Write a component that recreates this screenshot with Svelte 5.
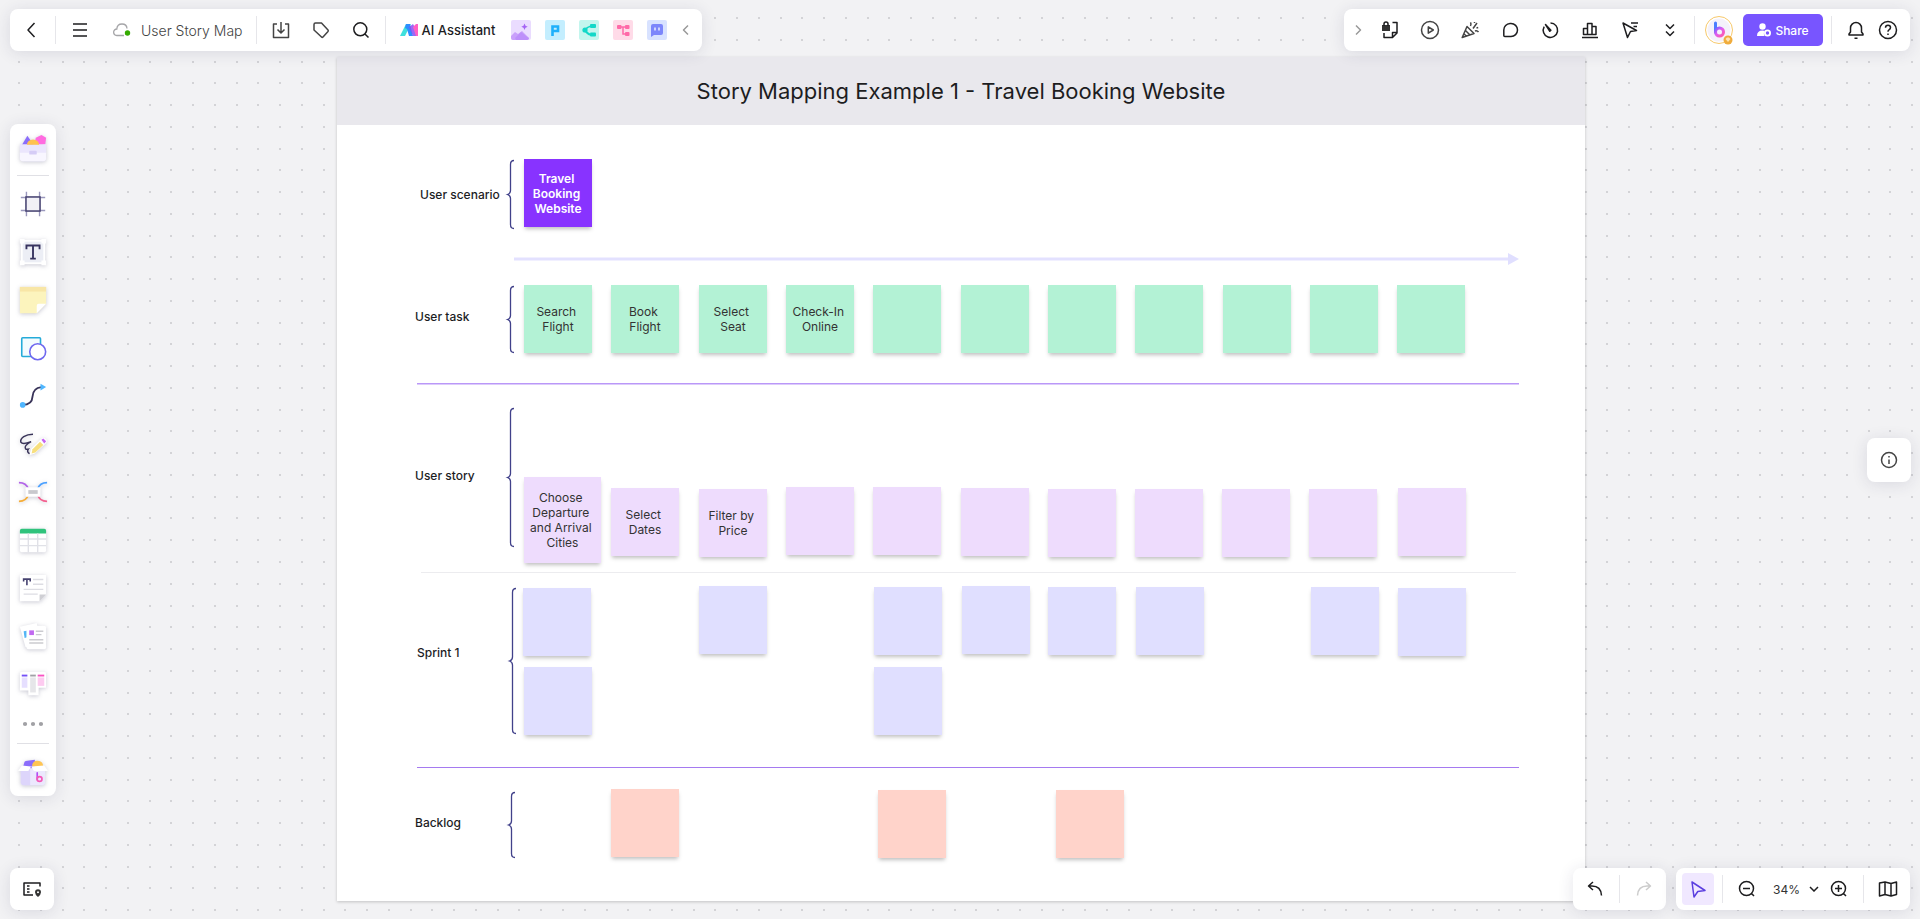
<script lang="ts">
	type Note = { x: number; y: number; text?: string; kind: string };

	// Canvas zoom; the dot grid is 64 units wide at 100%
	const zoom = 0.34;
	const gridStep = 64 * zoom;

	let innerHeight = $state(900);
	let gridRows = $derived(Array.from({ length: Math.ceil(innerHeight / gridStep) }, (_, i) => Math.round(18 + i * gridStep)));

	const taskTexts = ['Search \nFlight', 'Book \nFlight', 'Select \nSeat', 'Check-In \nOnline'];
	const taskX = [187, 274, 362, 449, 536, 624, 711, 798, 886, 973, 1060];

	const notes: Note[] = [
		{ x: 187, y: 102, kind: 'scenario', text: 'Travel \nBooking \nWebsite' },
		...taskX.map((x, i) => ({ x, y: 228, kind: 'task', text: taskTexts[i] })),

		{ x: 187, y: 420, kind: 'story large', text: 'Choose \nDeparture \nand Arrival \nCities' },
		{ x: 274, y: 431, kind: 'story', text: 'Select \nDates' },
		{ x: 362, y: 432, kind: 'story', text: 'Filter by \nPrice' },
		{ x: 449, y: 430, kind: 'story' },
		{ x: 536, y: 430, kind: 'story' },
		{ x: 624, y: 431, kind: 'story' },
		{ x: 711, y: 432, kind: 'story' },
		{ x: 798, y: 432, kind: 'story' },
		{ x: 885, y: 432, kind: 'story' },
		{ x: 972, y: 432, kind: 'story' },
		{ x: 1061, y: 431, kind: 'story' },

		{ x: 186, y: 531, kind: 'sprint' },
		{ x: 362, y: 529, kind: 'sprint' },
		{ x: 537, y: 530, kind: 'sprint' },
		{ x: 625, y: 529, kind: 'sprint' },
		{ x: 711, y: 530, kind: 'sprint' },
		{ x: 799, y: 530, kind: 'sprint' },
		{ x: 974, y: 530, kind: 'sprint' },
		{ x: 1061, y: 531, kind: 'sprint' },
		{ x: 187, y: 610, kind: 'sprint' },
		{ x: 537, y: 610, kind: 'sprint' },

		{ x: 274, y: 732, kind: 'backlog' },
		{ x: 541, y: 733, kind: 'backlog' },
		{ x: 719, y: 733, kind: 'backlog' }
	];

	const labels = [
		{ x: 83, y: 130, text: 'User scenario' },
		{ x: 78, y: 252, text: 'User task' },
		{ x: 78, y: 411, text: 'User story' },
		{ x: 80, y: 588, text: 'Sprint 1' },
		{ x: 78, y: 758, text: 'Backlog' }
	];

	const braces = [
		{ x: 170, y: 103, h: 69 },
		{ x: 170, y: 229, h: 67 },
		{ x: 170, y: 351, h: 139 },
		{ x: 172, y: 531, h: 146 },
		{ x: 171, y: 735, h: 66 }
	];

	function bracePath({ x, y, h }: { x: number; y: number; h: number }) {
		const m = h / 2;
		return `M${x + 7} ${y + 0.5}q-3.5 0-3.5 4V${y + m - 4}q0 3-3 4q3 1 3 4V${y + h - 4.5}q0 4 3.5 4`;
	}

	// Plain outline icons, 24 x 24
	const icons: Record<string, string> = {
		back: 'M15.500 5L9 12l6.500 7',
		menu: 'M5 6h14M5 12h14M5 18h14',
		download: 'M8 6H4.500v13.500h15V6H16M12 4v11M8.500 11.500L12 15l3.500-3.500',
		tag: 'M5 6.500q0-1.500 1.500-1.500H12.500L19 12q.6.800 0 1.500l-5 5.500q-.8.700-1.500 0L5 12z',
		search: 'M11.300 4.800a6.500 6.500 0 1 0 0 13 6.500 6.500 0 1 0 0-13M16.200 16.200L19.500 19.500',
		prev: 'M14 7.500L9.500 12l4.500 4.500',
		next: 'M10 7.500l4.500 4.500-4.500 4.500',
		play: 'M12 3.500a8.500 8.500 0 1 0 0 17 8.500 8.500 0 1 0 0-17M10.300 8.800v6.400l5-3.200z',
		celebrate:
			'M9 8.500l7 7L4.200 19.500zM7.500 12.500l4.500 4.500M6.200 16l2 2M12.500 8q1-2 0-3.700M15 10.500l4-5.500M17 13q2-1 3.500 1M16.500 4v1M20.200 9.500l-1.700.5',
		comment: 'M12 5.500h1a6.500 6.500 0 0 1 0 13H6.800q-1 0-1-1V12A6.500 6.500 0 0 1 12 5.500z',
		timer: 'M12.500 5a7.200 7.200 0 1 1-6.300 3.600M12.900 12.300L7.500 6.500l4.300 6.800z',
		chart: 'M4 19.500h16M5.500 16.500v-6h4v6zM9.500 16.500V5.500h4.500v11zM14 16.500V8.500h4v8zM5.500 16.500H18',
		pointer: 'M5 5l4.500 14.500 3-6 6-1zM13 5h7M15.500 8.500h3.500',
		more: 'M8 6.500l4 4 4-4M8 13.500l4 4 4-4',
		bell: 'M5 17V16l1.500-2V10a5.500 5.500 0 0 1 11 0v4l1.500 2v1zM10.500 20.300h3',
		help: 'M12 3.500a8.500 8.500 0 1 0 0 17 8.500 8.500 0 1 0 0-17M9.500 9.800q0-2.500 2.500-2.500t2.500 2.300q0 1.400-1.500 2.200-1 .6-1 2M12 15.500v1.500',
		info: 'M12 4.500a7.500 7.500 0 1 0 0 15 7.500 7.500 0 1 0 0-15M12 11.500v4.500M12 8v1.500',
		undo: 'M10 5L5.500 9l4.500 4M5.500 9H9q9 0 9.500 9.500',
		redo: 'M14 5l4.500 4-4.500 4M18.500 9H15Q6 9 5.500 18.500',
		cursor: 'M6 5l2 15 3.800-5.500L19 13.500z',
		zoomOut: 'M11.500 4.500a7 7 0 1 0 0 14 7 7 0 1 0 0-14M16.500 16.500L19 19M8 11.500h7',
		zoomIn: 'M11.500 4.500a7 7 0 1 0 0 14 7 7 0 1 0 0-14M16.500 16.500L19 19M8 11.500h7M11.500 8v7',
		map: 'M3.500 6v13l5.500-1.500 6 1.500 5.500-1.500V5L15 6.500 9 5zM9 5v12.500M15 6.500V19'
	};

	const rightTools = ['play', 'celebrate', 'comment', 'timer', 'chart', 'pointer', 'more'];
</script>

<svelte:window bind:innerHeight />

{#snippet icon(name: string)}
	<svg class="icon" viewBox="0 0 24 24" aria-hidden="true"><path d={icons[name]} /></svg>
{/snippet}

<div class="app">
	<svg class="grid" aria-hidden="true">
		{#each gridRows as y}
			<line x1="18" x2="100%" y1={y} y2={y} stroke-dasharray="2 {gridStep - 2}" />
		{/each}
	</svg>

	<main class="frame">
		<h1>Story Mapping Example 1 - Travel Booking Website</h1>

		<svg class="lines" viewBox="0 0 1248 844" aria-hidden="true">
			<path d="M177 202H1172" stroke="#e3e1ff" stroke-width="3" />
			<path d="M1171 196l11 6-11 6z" fill="#e0dfff" />
			<path d="M80 326.800H1182" stroke="#ba97f8" stroke-width="1.500" />
			<path d="M84 515.500H1179" stroke="#ececef" />
			<path d="M80 710.500H1182" stroke="#a57af0" />
			{#each braces as b}
				<path d={bracePath(b)} fill="none" stroke="#41418a" stroke-width="1.300" />
			{/each}
		</svg>

		{#each labels as l}
			<span class="label" style:left="{l.x}px" style:top="{l.y}px">{l.text}</span>
		{/each}

		{#each notes as n}
			<div class="note {n.kind}" style:left="{n.x}px" style:top="{n.y}px">{n.text ?? ''}</div>
		{/each}
	</main>

	<header class="panel bar top-left">
		<button aria-label="Back">{@render icon('back')}</button>
		<i class="sep"></i>
		<button aria-label="Menu">{@render icon('menu')}</button>
		<button class="doc-title">
			<svg width="18" height="14" viewBox="0 0 18 14" aria-hidden="true">
				<path d="M11 12.500H4A3.200 3.200 0 0 1 3.800 6C4 3 6.200 1 9 1s4.800 1.800 5 4.500" fill="none" stroke="#a5a5a8" stroke-width="1.300" />
				<circle cx="14.500" cy="10" r="2.700" fill="#35ab00" />
			</svg>
			User Story Map
		</button>
		<i class="sep"></i>
		<button class="soft" aria-label="Export">{@render icon('download')}</button>
		<button class="soft" aria-label="Tag">{@render icon('tag')}</button>
		<button aria-label="Search">{@render icon('search')}</button>
		<i class="sep"></i>
		<button class="assistant">
			<svg width="18" height="14" viewBox="0 0 18 14" aria-hidden="true">
				<path d="M6 1h5L5 13H0z" fill="#3fe0dc" />
				<path d="M6 1h4l3 12H9L7 6 5 5z" fill="#2f8dff" />
				<path d="M9 4l4 9h4V8l-4-7z" fill="#8a4df5" opacity=".85" />
				<path d="M13 4l3-3h2v12h-2z" fill="#ff5fc4" />
			</svg>
			AI Assistant
		</button>
		<div class="ai-tools">
			<button aria-label="AI image">
				<svg viewBox="0 0 20 20">
					<rect width="20" height="20" rx="2" fill="#eadcff" />
					<path d="M0 16l4-4 3 2 4-3 7 7q0 2-2 2H2q-2 0-2-2z" fill="#c9a0fb" />
					<path d="M4 18l6-6 5 4 3 2q0 2-3 2H5z" fill="#b583fa" opacity=".6" />
					<path d="M13.500 3.500l1 2.200 2.200 1-2.200 1-1 2.200-1-2.200-2.200-1 2.200-1z" fill="#a564f5" />
				</svg>
			</button>
			<button aria-label="AI presentation">
				<svg viewBox="0 0 20 20">
					<rect width="20" height="20" rx="2" fill="#c4eefe" />
					<path d="M7.500 16V6.500H13V11H8" fill="none" stroke="#1fb0fb" stroke-width="2.600" />
				</svg>
			</button>
			<button aria-label="AI mind map">
				<svg viewBox="0 0 20 20">
					<rect width="20" height="20" rx="2" fill="#c3f6ee" />
					<path d="M15 6h-3q-4 1-6 4 2 4 6 5h3" fill="none" stroke="#12d8c8" stroke-width="1.800" />
					<rect x="11" y="4" width="6" height="4" rx="1" fill="#12d8c8" />
					<rect x="11" y="12.500" width="6" height="4" rx="1" fill="#12d8c8" />
					<circle cx="6" cy="10" r="2.600" fill="#12d8c8" />
				</svg>
			</button>
			<button aria-label="AI diagram">
				<svg viewBox="0 0 20 20">
					<rect width="20" height="20" rx="2" fill="#ffdbe8" />
					<path d="M6 7h8M10 7v7h4" fill="none" stroke="#ff6aa8" stroke-width="1.500" />
					<rect x="4" y="5" width="4.500" height="4" rx="1" fill="#ff6aa8" />
					<rect x="12" y="5" width="4.500" height="4" rx="1" fill="#ff6aa8" />
					<rect x="12" y="12" width="4.500" height="4" rx="1" fill="#ff6aa8" />
				</svg>
			</button>
			<button aria-label="AI chat">
				<svg viewBox="0 0 20 20">
					<rect width="20" height="20" rx="2" fill="#d8e2ff" />
					<path d="M6 4h8q2 0 2 2v7q0 2-2 2H7l-3 2V6q0-2 2-2z" fill="#7c86fb" />
					<path d="M8 7.500v3M12 7.500v3" stroke="#e4e7ff" stroke-width="1.600" />
				</svg>
			</button>
		</div>
		<button class="collapse faint" aria-label="Collapse">{@render icon('prev')}</button>
	</header>

	<nav class="panel bar top-right">
		<button class="narrow faint" aria-label="Expand">{@render icon('next')}</button>
		<button aria-label="Lock">
			<svg class="icon" viewBox="0 0 24 24">
				<path d="M14.500 4.500H19V15l-4.500 4.500H6V15M19 14.500h-4.500v5" />
				<rect x="4" y="7" width="8" height="6" fill="#333" stroke="none" />
				<path d="M6 8V6q0-2 2-2t2 2v2" />
			</svg>
		</button>
		{#each rightTools as name}
			<button class:soft={name === 'play' || name === 'celebrate'} aria-label={name}>{@render icon(name)}</button>
		{/each}
		<i class="sep"></i>
		<button class="avatar" aria-label="Account">
			<svg width="32" height="32" viewBox="0 0 32 32">
				<defs>
					<linearGradient id="brand" x1="0" y1="0" x2="1" y2="1">
						<stop offset="0" stop-color="#7a62ff" />
						<stop offset=".45" stop-color="#e05cf0" />
						<stop offset="1" stop-color="#ff5ba8" />
					</linearGradient>
				</defs>
				<circle cx="16" cy="16" r="13.500" fill="#fff" stroke="#f7c96b" />
				<circle cx="16" cy="16" r="11.500" fill="#f4f1fb" />
				<path d="M12.500 9v9" fill="none" stroke="#4b7dff" stroke-width="3" stroke-linecap="round" />
				<circle cx="16.500" cy="18" r="4" fill="none" stroke="url(#brand)" stroke-width="3" />
				<circle cx="25" cy="26" r="4.500" fill="#f0ac3c" />
				<path d="M22.500 25l1.500-1.500h2l1.500 1.500-2.500 3z" fill="#ffe6b0" />
			</svg>
		</button>
		<button class="share">
			<svg width="14" height="14" viewBox="0 0 14 14" aria-hidden="true">
				<circle cx="5.500" cy="3.500" r="3.200" fill="#fff" />
				<path d="M0 13q0-5.500 5.500-5.500 1.500 0 2.500.5-2 2-.5 5z" fill="#fff" />
				<circle cx="10.500" cy="10" r="2.600" fill="none" stroke="#fff" stroke-width="1.800" />
			</svg>
			Share
		</button>
		<i class="sep"></i>
		<div class="pair">
			<button aria-label="Notifications">{@render icon('bell')}</button>
			<button aria-label="Help">{@render icon('help')}</button>
		</div>
	</nav>

	<aside class="panel tools">
		<button aria-label="Templates">
			<svg class="lift" viewBox="0 0 32 32">
				<path d="M4 13L10 3l7 10z" fill="#8b6dfb" />
				<path d="M19 5l6-3 5 3-1 7-7 1-4-3z" fill="#ff6be0" />
				<path d="M2 12h28v15q0 3-3 3H5q-3 0-3-3z" fill="#ebe6fd" />
				<path d="M2 21h28v6q0 3-3 3H5q-3 0-3-3z" fill="#f8f6ff" />
				<path d="M9.500 12.500a6.500 5.500 0 0 1 13 0z" fill="#ffc24f" />
				<rect x="12" y="19" width="8" height="4" rx="1" fill="#d5ccf6" />
			</svg>
		</button>
		<i class="rule"></i>
		<button aria-label="Frame">
			<svg viewBox="0 0 32 32">
				<path d="M9 3v26M23 3v26M3 9h26M3 23h26" stroke="#9a98bd" stroke-width="1.500" />
				<rect x="8.500" y="8.500" width="15" height="15" fill="#f1f0f6" stroke="#45416f" stroke-width="1.600" />
			</svg>
		</button>
		<button aria-label="Text">
			<svg class="lift" viewBox="0 0 32 32">
				<rect x="4" y="4" width="24" height="24" fill="#eceef5" stroke="#fff" stroke-width="2" />
				<path d="M2 2h5v5H2zM25 2h5v5h-5zM2 25h5v5H2zM25 25h5v5h-5z" fill="#fff" />
				<path d="M9 13V9h14v4M16 9v14M13 23h6" fill="none" stroke="#37335f" stroke-width="2" />
			</svg>
		</button>
		<button aria-label="Sticky note">
			<svg class="lift" viewBox="0 0 32 32">
				<path d="M2 2h28v18l-10 10H2z" fill="#fcf4bd" />
				<path d="M2 2h28v5H2z" fill="#f8e6a6" />
				<path d="M20 30v-8q0-2 2-2h8z" fill="#fff" />
			</svg>
		</button>
		<button aria-label="Shapes">
			<svg viewBox="0 0 32 32">
				<rect x="4" y="5" width="20" height="20" rx="1" fill="#f3fbfe" stroke="#25abd9" stroke-width="1.700" />
				<circle cx="21" cy="20" r="8.500" fill="#fff" stroke="#6f68ef" stroke-width="1.700" />
			</svg>
		</button>
		<button aria-label="Connector">
			<svg viewBox="0 0 32 32">
				<path d="M5 25.500q10 0 10.500-9T25 6.500" fill="none" stroke="#393459" stroke-width="2" />
				<circle cx="5" cy="25.500" r="3" fill="#4fb6ff" />
				<path d="M24 3l6 3.500-6 3.500z" fill="#4fb6ff" />
			</svg>
		</button>
		<button aria-label="Pen">
			<svg class="lift" viewBox="0 0 32 32">
				<path d="M16 5.500C8 5.500 2 9.500 3 14q2 3 11-.500C9 16 6.500 19 8 21q1 1 3 .5-2 3 1.500 5" fill="none" stroke="#393459" stroke-width="1.600" />
				<path d="M12 28l2-7L25 10q3-2 5 1t-1 5L18 26z" fill="#fff" />
				<path d="M14.500 26l1-4.500 8-8 3.500 3.500-8.500 8z" fill="#f7df7e" />
				<path d="M25 11.500l2-1.500 3 3-2 2.500z" fill="#c564f3" />
			</svg>
		</button>
		<button aria-label="Mind map">
			<svg class="lift" viewBox="0 0 32 32">
				<g fill="none" stroke-width="1.800">
					<path d="M1 6q8 0 10 7" stroke="#b263e8" />
					<path d="M31 6q-8 0-10 7" stroke="#4aa0ff" />
					<path d="M1 26q8 0 10-7" stroke="#f6ad37" />
					<path d="M31 26q-8 0-10-7" stroke="#f3608f" />
				</g>
				<rect x="8" y="11" width="16" height="10" rx="1" fill="#fff" />
				<rect x="11" y="14" width="10" height="4" fill="#c9c9cd" />
			</svg>
		</button>
		<button aria-label="Table">
			<svg class="lift" viewBox="0 0 32 32">
				<rect x="2" y="4" width="28" height="25" rx="2" fill="#fff" />
				<path d="M2 9V6q0-2 2-2h24q2 0 2 2v3z" fill="#30c37c" />
				<path d="M2 15h28M2 22h28M11 9v20M21 9v20" stroke="#e0e1e7" stroke-width="1.500" />
			</svg>
		</button>
		<button aria-label="Document">
			<svg class="lift" viewBox="0 0 32 32">
				<path d="M2 2h28v21l-7 7H2z" fill="#fff" />
				<path d="M6 9V6.500h7V9M9.500 6.500V13" fill="none" stroke="#45416f" stroke-width="1.700" />
				<path d="M16 7h11M16 12h11M6 17.500h21M6 22.500h15" stroke="#dddde3" stroke-width="1.500" />
				<path d="M23 30v-7h7z" fill="#cfcfd4" />
			</svg>
		</button>
		<button aria-label="Cards">
			<svg class="lift" viewBox="0 0 32 32">
				<path d="M2 6l18-4 4 22-16 4z" fill="#fff" />
				<path d="M6 11l5-1v7l-4 1z" fill="#53b5f5" />
				<rect x="9" y="5" width="21" height="25" rx="2" fill="#fff" />
				<rect x="12" y="10" width="5" height="5" fill="#c16af0" />
				<path d="M19 11h8M19 14.500h6M12 20h15M12 23.500h15" stroke="#cbcbd0" stroke-width="1.500" />
			</svg>
		</button>
		<button aria-label="Kanban">
			<svg class="lift" viewBox="0 0 32 32">
				<path d="M4 3h24q2 0 2 2v15h-8v8H11v-5H2V5q0-2 2-2z" fill="#fff" />
				<path d="M4 7h6" stroke="#7450f7" stroke-width="2" />
				<path d="M13 7h6" stroke="#a1a1a6" stroke-width="2" />
				<path d="M21 7h7" stroke="#f951c3" stroke-width="2" />
				<path d="M4 9h6v11H4z" fill="#e6dfff" />
				<path d="M13 9h6v16h-6z" fill="#e6e6e9" />
				<path d="M21 9h7v9h-7z" fill="#fdcbf0" />
			</svg>
		</button>
		<button class="dots" aria-label="More tools">
			<svg viewBox="0 0 32 32"><path d="M7.500 16h.01M16 16h.01M24.500 16h.01" stroke="#a1a1a5" stroke-width="4.500" stroke-linecap="round" /></svg>
		</button>
		<i class="rule"></i>
		<button aria-label="Resources">
			<svg class="lift" viewBox="0 0 32 32">
				<path d="M5 12l2-7q1-1 3-1l8-1v9z" fill="#8b6dfb" />
				<path d="M15 10q0-6 6-6t6 7z" fill="#ffc553" />
				<path d="M3 12h26v15q0 3-3 3H6q-3 0-3-3z" fill="#ece8fd" />
				<path d="M3 12h10v18H6q-3 0-3-3z" fill="#ddd5fb" />
				<path d="M4 9l10 1-3 5H0zM28 9l-14 1 3 5h15z" fill="#fff" />
				<path d="M20.500 17v7" stroke="#b44df4" stroke-width="1.800" stroke-linecap="round" />
				<circle cx="23" cy="23.500" r="2.600" fill="none" stroke="#f459b9" stroke-width="1.800" />
			</svg>
		</button>
	</aside>

	<button class="panel square layers" aria-label="Layers">
		<svg class="icon" viewBox="0 0 24 24">
			<path d="M13 18H4V6h16v3.500M7 9h2.500M7 12h2.500M7 15h2.500" />
			<path d="M18 20q-3-2.500-3-4.800a3 3 0 0 1 6 0Q21 17.500 18 20zm0-5.800a1 1 0 1 0 0 2 1 1 0 1 0 0-2" fill="#333" fill-rule="evenodd" stroke="none" />
		</svg>
	</button>

	<button class="panel square soft info" aria-label="Info">{@render icon('info')}</button>

	<footer class="bottom-right">
		<div class="panel bar">
			<button aria-label="Undo">{@render icon('undo')}</button>
			<i class="sep"></i>
			<button class="disabled" aria-label="Redo" disabled>{@render icon('redo')}</button>
		</div>
		<div class="panel bar">
			<button class="active" aria-label="Select">{@render icon('cursor')}</button>
			<i class="sep"></i>
			<button aria-label="Zoom out">{@render icon('zoomOut')}</button>
			<div class="zoom">
				<select aria-label="Zoom level">
					<option>34%</option>
				</select>
				<svg width="10" height="6" viewBox="0 0 10 6" aria-hidden="true"><path d="M1 1l4 4 4-4" /></svg>
			</div>
			<button aria-label="Zoom in">{@render icon('zoomIn')}</button>
			<i class="sep"></i>
			<button aria-label="Map">{@render icon('map')}</button>
		</div>
	</footer>
</div>

<style>
	:global(body) {
		overflow: hidden;
	}

	.app {
		position: relative;
		height: 100vh;
		overflow: hidden;
		background: #f2f2f4;
		color: #1d1d1f;
		font-family: Inter, 'Liberation Sans', sans-serif;
	}

	.grid {
		position: absolute;
		width: 100%;
		height: 100%;
	}

	.grid line {
		stroke: #d3d3d6;
		stroke-width: 2;
		shape-rendering: crispEdges;
	}

	/* story map */
	.frame {
		position: absolute;
		left: calc(50% - 623px);
		top: 57px;
		width: 1248px;
		height: 844px;
		background: #fff;
		box-shadow: 0 1px 3px rgba(0, 0, 0, 0.2);
	}

	h1 {
		margin: 0;
		background: #e9e8ed;
		font-size: 22px;
		font-weight: 400;
		line-height: 68px;
		text-align: center;
	}

	.lines {
		position: absolute;
		inset: 0;
	}

	.label {
		position: absolute;
		font-size: 12px;
		font-weight: 500;
		line-height: 16px;
		white-space: nowrap;
	}

	.note {
		position: absolute;
		display: flex;
		align-items: center;
		justify-content: center;
		width: 68px;
		height: 68px;
		box-shadow: 0 3px 4px -1px rgba(0, 0, 0, 0.25);
		color: #333;
		font-size: 12px;
		line-height: 15px;
		text-align: center;
		white-space: pre;
	}

	.note.large {
		width: 77px;
		height: 86px;
	}

	.scenario {
		background: #8833ff;
		color: #fff;
		font-weight: 600;
	}

	.task {
		background: #b3f2d5;
	}

	.story {
		background: #eedcfd;
	}

	.sprint {
		background: #e0dfff;
	}

	.backlog {
		background: #ffd3ca;
	}

	/* floating panels */
	.panel {
		border-radius: 8px;
		background: #fff;
		box-shadow: 0 2px 16px rgba(40, 40, 80, 0.12);
	}

	.bar {
		display: flex;
		align-items: center;
		gap: 8px;
		height: 42px;
		padding: 0 6px;
	}

	.top-left {
		position: absolute;
		left: 10px;
		top: 9px;
		padding: 0 5px;
	}

	.top-right {
		position: absolute;
		right: 10px;
		top: 9px;
	}

	button {
		display: flex;
		flex: none;
		align-items: center;
		justify-content: center;
		width: 32px;
		height: 32px;
		padding: 0;
		border: 0;
		border-radius: 4px;
		background: none;
		color: #1d1d1f;
		font: inherit;
		cursor: pointer;
	}

	.icon {
		flex: none;
		width: 24px;
		height: 24px;
		fill: none;
		stroke: currentColor;
		stroke-width: 1.5;
		stroke-linejoin: round;
	}

	.soft {
		color: #444;
	}

	.faint {
		color: #999;
	}

	.narrow {
		width: 16px;
	}

	.collapse {
		width: 22px;
	}

	.sep {
		width: 1px;
		height: 28px;
		background: #e6e6ea;
	}

	.doc-title {
		gap: 10px;
		width: auto;
		padding: 0 5px 0 9px;
		color: #444;
		font-size: 14px;
		font-weight: 300;
	}

	.assistant {
		gap: 4px;
		width: auto;
		padding: 0 8px 0 6px;
		font-size: 13px;
		font-weight: 500;
	}

	.ai-tools {
		display: flex;
		gap: 14px;
	}

	.ai-tools button,
	.ai-tools svg {
		width: 20px;
		height: 20px;
	}

	.share {
		gap: 4px;
		width: 80px;
		border-radius: 5px;
		background: #7855ff;
		color: #fff;
		font-size: 12px;
		font-weight: 500;
	}

	.pair {
		display: flex;
	}

	.tools {
		position: absolute;
		left: 10px;
		top: 124px;
		width: 46px;
	}

	.tools button {
		width: 46px;
		height: 48px;
	}

	.tools .dots {
		height: 32px;
	}

	.tools svg {
		width: 30px;
		height: 30px;
		overflow: visible;
		fill: none;
	}

	.lift {
		filter: drop-shadow(0 1px 2px rgba(40, 40, 80, 0.25));
	}

	.rule {
		display: block;
		height: 1px;
		margin: 3px 7px 4px;
		background: #e0e0e5;
	}

	.square {
		position: absolute;
		width: 44px;
		height: 44px;
		border-radius: 8px;
		background: #fff;
	}

	.layers {
		left: 10px;
		bottom: 9px;
		height: 42px;
	}

	.info {
		right: 9px;
		top: calc(50% - 22px);
	}

	.bottom-right {
		position: absolute;
		right: 10px;
		bottom: 9px;
		display: flex;
		gap: 10px;
	}

	.disabled {
		color: #ccc;
	}

	.active {
		background: #f0e8ff;
		color: #5b3fe0;
	}

	.zoom {
		display: flex;
		align-items: center;
		width: 52px;
		margin: 0 -4px;
	}

	.zoom select {
		width: 42px;
		height: 32px;
		padding: 0 0 0 6px;
		border: 0;
		appearance: none;
		background: none;
		color: #333;
		font: inherit;
		font-size: 12px;
	}

	.zoom svg {
		fill: none;
		stroke: #1d1d1f;
		stroke-width: 1.5;
	}
</style>
